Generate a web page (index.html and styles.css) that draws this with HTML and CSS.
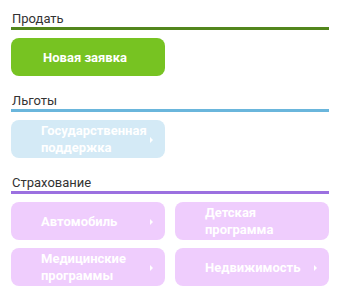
FILE: index.html
```html
<!DOCTYPE html>
<html lang="ru">
<head>
    <meta charset="UTF-8">
    <title>Меню</title>
    <link rel="stylesheet" href="styles.css">
</head>
<body>
<div class="menu">
    <div class="section">
        <div class="title sell">Продать</div>
        <div class="grid">
            <a class="btn green center">Новая заявка</a>
        </div>
    </div>
    <div class="section">
        <div class="title benefits">Льготы</div>
        <div class="grid">
            <a class="btn blue arrow">Государственная поддержка</a>
        </div>
    </div>
    <div class="section">
        <div class="title insurance">Страхование</div>
        <div class="grid">
            <a class="btn purple arrow">Автомобиль</a>
            <a class="btn purple">Детская программа</a>
            <a class="btn purple arrow">Медицинские программы</a>
            <a class="btn purple arrow">Недвижимость</a>
        </div>
    </div>
</div>
</body>
</html>
```
FILE: styles.css
```css
body {margin: 0; background: #fff; font-family: Roboto, "Liberation Sans", sans-serif;}
.menu {width: 318px; padding: 10px 0 0 11px;}
.section {margin-bottom: 16px;}
.title {font-size: 13px; line-height: 17px; color: #333; padding-left: 1px; border-bottom: 3px solid #ccc;}
.sell {border-color: #52861c;}
.benefits {border-color: #6ab6dc;}
.insurance {border-color: #9b70e0;}
.grid {display: grid; grid-template-columns: 154px 154px; column-gap: 10px; row-gap: 8px; margin-top: 8px;}
.btn {position: relative; display: flex; align-items: center; height: 38px; box-sizing: border-box; padding: 0 14px 0 30px; border-radius: 8px; color: #fff; font-size: 13px; font-weight: bold; line-height: 17px;}
.center {justify-content: center; padding: 0 6px 0 0;}
.green {background: #77c322;}
.blue {background: #d4eaf6;}
.purple {background: #efcdfd;}
.arrow::after {content: ""; position: absolute; right: 12px; top: 17px; border-left: 3px solid #fff; border-top: 3px solid transparent; border-bottom: 3px solid transparent;}
```
